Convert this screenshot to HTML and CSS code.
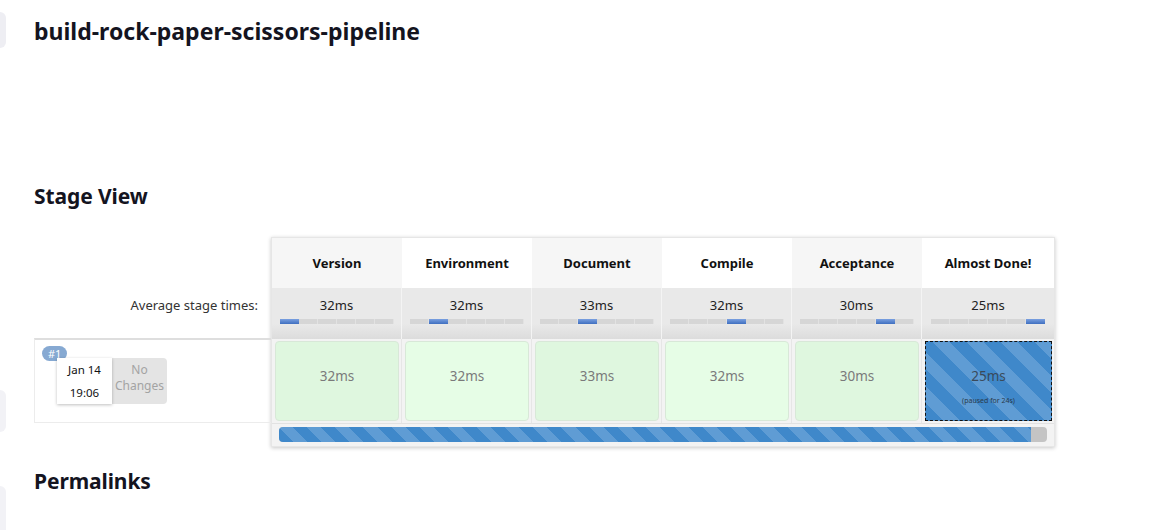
FILE: index.html
```html
<!DOCTYPE html>
<html>
<head>
<meta charset="utf-8">
<link rel="stylesheet" href="styles.css">
</head>
<body>
<div class="page">
  <aside class="side">
    <div class="side-item s1"></div>
    <div class="side-item s2"></div>
    <div class="side-item s3"></div>
  </aside>
  <main class="main">
    <h1 class="title">build-rock-paper-scissors-pipeline</h1>
    <h2 class="section stage-title">Stage View</h2>
    <div class="stage-view">
      <div class="labels">
        <div class="lab-head"></div>
        <div class="lab-avg">Average stage times:</div>
        <div class="lab-build">
          <div class="build-card">
            <span class="badge">#1</span>
            <div class="date"><span>Jan 14</span><span>19:06</span></div>
            <div class="changes">No<br>Changes</div>
          </div>
        </div>
      </div>
      <div class="table">
        <div class="row head">
          <div class="col odd">Version</div>
          <div class="col">Environment</div>
          <div class="col odd">Document</div>
          <div class="col">Compile</div>
          <div class="col odd">Acceptance</div>
          <div class="col last">Almost Done!</div>
        </div>
        <div class="row avg">
          <div class="col"><span>32ms</span><div class="bar"><i style="left:0px"></i></div></div>
          <div class="col"><span>32ms</span><div class="bar"><i style="left:19px"></i></div></div>
          <div class="col"><span>33ms</span><div class="bar"><i style="left:38px"></i></div></div>
          <div class="col"><span>32ms</span><div class="bar"><i style="left:57px"></i></div></div>
          <div class="col"><span>30ms</span><div class="bar"><i style="left:76px"></i></div></div>
          <div class="col last"><span>25ms</span><div class="bar"><i style="left:95px"></i></div></div>
        </div>
        <div class="row builds">
          <div class="col"><div class="cell odd">32ms</div></div>
          <div class="col"><div class="cell">32ms</div></div>
          <div class="col"><div class="cell odd">33ms</div></div>
          <div class="col"><div class="cell">32ms</div></div>
          <div class="col"><div class="cell odd">30ms</div></div>
          <div class="col last"><div class="cell paused"><span class="t">25ms</span><span class="p">(paused for 24s)</span></div></div>
        </div>
        <div class="row progress">
          <div class="pbar"><div class="pfill"></div></div>
        </div>
      </div>
    </div>
    <h2 class="section perma">Permalinks</h2>
  </main>
</div>
</body>
</html>
```
FILE: styles.css
```css
* { box-sizing: border-box; }
html, body { margin: 0; padding: 0; background: #fff; }
body {
  font-family: "Noto Sans", "Open Sans", sans-serif;
  color: #14141f;
  height: 530px;
  overflow: hidden;
}
.page { display: flex; }
.side {
  width: 6px;
  display: flex;
  flex-direction: column;
}
.side-item {
  background: #eeeef3;
  border-radius: 0 8px 8px 0;
}
.s1 { margin-top: 12px; height: 36px; }
.s2 { margin-top: 342px; height: 42px; background: #f2f2f6; }
.s3 { margin-top: 54px; height: 60px; background: #f2f2f6; }

.main { padding-left: 28px; flex: 1; }
.title {
  margin: 0;
  padding-top: 15px;
  font-size: 23px;
  line-height: 32px;
  font-weight: 700;
  letter-spacing: 0;
}
.section {
  margin: 0;
  font-size: 21px;
  line-height: 28px;
  font-weight: 700;
  letter-spacing: -0.1px;
}
.stage-title { margin-top: 135px; }
.perma { margin-top: 20px; }

.stage-view {
  display: flex;
  margin-top: 27px;
  font-size: 13px;
}
.labels { width: 237px; display: flex; flex-direction: column; }
.lab-head { height: 51px; }
.lab-avg {
  height: 50px;
  text-align: right;
  padding-right: 13px;
  padding-top: 8px;
  color: #333;
  font-size: 13px;
}
.lab-build {
  height: 85px;
  border-top: 2px solid #dedede;
  border-left: 1px solid #ececec;
  border-bottom: 1px solid #ececec;
  position: relative;
}
.build-card {
  display: flex;
  margin: 18px 0 0 22px;
}
.badge {
  position: absolute;
  left: 7px;
  top: 6px;
  background: #86a9d2;
  color: #fff;
  font-size: 11px;
  line-height: 15px;
  padding: 0 6px;
  border-radius: 8px;
}
.date {
  width: 55px;
  height: 46px;
  background: #fff;
  box-shadow: 0 1px 3px rgba(0,0,0,.25);
  display: flex;
  flex-direction: column;
  align-items: center;
  justify-content: space-around;
  font-size: 11.5px;
  color: #111;
  position: relative;
  z-index: 1;
}
.changes {
  width: 55px;
  height: 46px;
  background: #e4e4e4;
  border-radius: 0 4px 4px 0;
  color: #a3a3a3;
  font-size: 12px;
  line-height: 16px;
  text-align: center;
  padding-top: 4px;
}

.table {
  width: 784px;
  border: 1px solid #e6e6e6;
  box-shadow: 0 1px 4px rgba(0,0,0,.22);
  background: #f3f3f3;
}
.row { display: flex; }
.col { width: 130px; }
.col.last { width: 132px; }
.head .col {
  height: 50px;
  display: flex;
  align-items: center;
  justify-content: center;
  font-weight: 700;
  font-size: 13px;
  background: #fff;
  color: #111;
}
.head .col.odd { background: #f6f6f6; }
.avg .col {
  height: 51px;
  background: linear-gradient(#e9e9e9 0%, #e9e9e9 70%, #dcdcdc 100%);
  border-right: 1px solid #f4f4f4;
  text-align: center;
  padding-top: 8px;
  color: #222;
  font-size: 13px;
}
.avg .col.last { border-right: 0; }
.avg .col span { display: block; line-height: 18px; }
.bar {
  position: relative;
  margin: 5px auto 0;
  width: 114px;
  height: 5px;
  background: repeating-linear-gradient(90deg, #d6d6d6 0 18px, #e2e2e2 18px 19px);
}
.bar i {
  position: absolute;
  top: 0;
  width: 19px;
  height: 5px;
  background: linear-gradient(#7aa0e0, #3f6fc0);
}
.builds .col {
  height: 84px;
  padding: 2px 2px 2px 3px;
  border-right: 1px solid #e6e6e6;
}
.builds .col.last { border-right: 0; }
.cell {
  height: 80px;
  border: 1px solid #d8e8d8;
  border-radius: 4px;
  background: #e6fde6;
  display: flex;
  flex-direction: column;
  align-items: center;
  justify-content: center;
  padding-bottom: 10px;
  color: #7a7a7a;
  font-size: 13.5px;
}
.cell.odd { background: #dff7df; }
.cell.paused {
  border: 1px dashed #111;
  border-radius: 0;
  background: repeating-linear-gradient(45deg, #3f88ca 0 12px, #5f9cd4 12px 24px);
  color: #3a4a5a;
  padding-bottom: 0;
  padding-top: 10px;
}
.cell.paused .p { font-size: 7px; margin-top: 11px; color: #2a3a4a; }
.progress {
  height: 23px;
  padding: 3px 6px 0 7px;
  border-top: 1px solid #e2e2e2;
}
.pbar {
  width: 768px;
  height: 15px;
  background: #c4c4c4;
  border-radius: 4px;
  overflow: hidden;
}
.pfill {
  width: 752px;
  height: 15px;
  background: repeating-linear-gradient(45deg, #3f88ca 0 10px, #5f9cd4 10px 20px);
}
```
